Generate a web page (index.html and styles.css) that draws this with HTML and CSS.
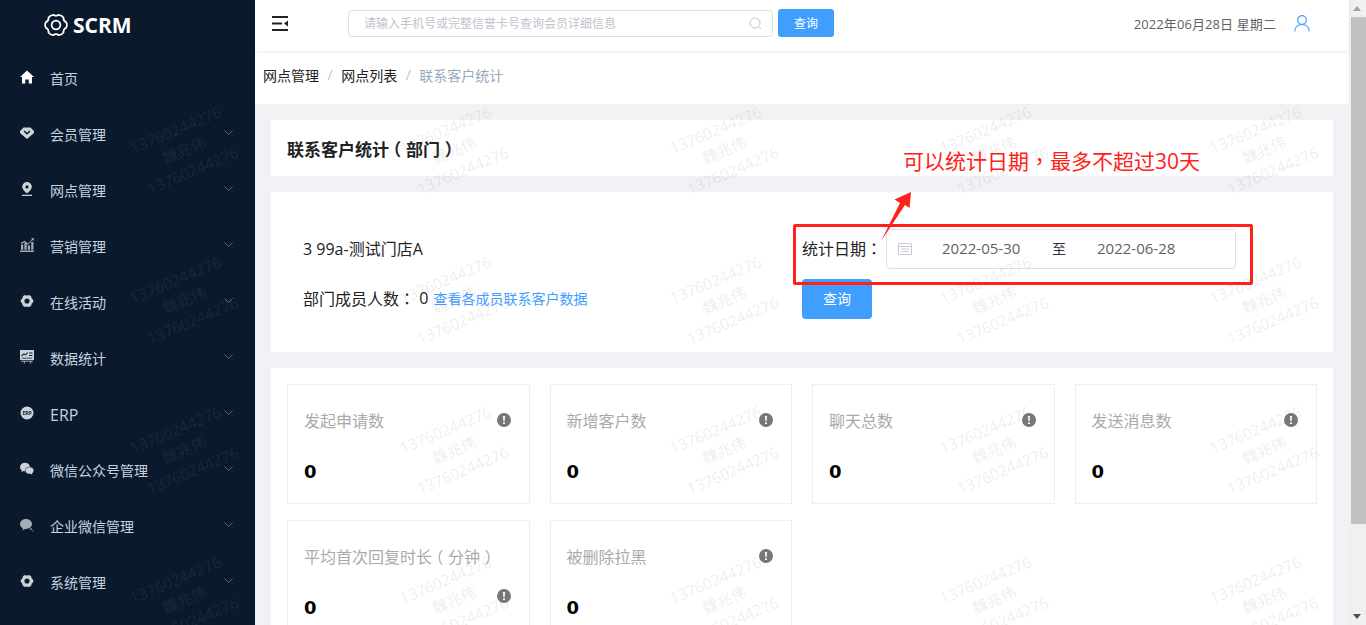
FILE: index.html
```html
<!DOCTYPE html>
<html lang="zh-CN">
<head>
    <meta charset="UTF-8">
    <meta name="viewport" content="width=device-width, initial-scale=1.0">
    <title>SCRM</title>
    <link rel="stylesheet" href="styles.css">
</head>
<body>
    <svg class="icon-defs" aria-hidden="true">
        <symbol id="gear-shape" viewBox="-12.5 -12.5 25 25">
            <path fill-rule="evenodd" d="M10.63-2.85Q12 0 10.63 2.85Q7.45 4.3 7.78 7.78Q6 10.39 2.85 10.63Q0 8.6-2.85 10.63Q-6 10.39-7.78 7.78Q-7.45 4.3-10.63 2.85Q-12 0-10.63-2.85Q-7.45-4.3-7.78-7.78Q-6-10.39-2.85-10.63Q0-8.6 2.85-10.63Q6-10.39 7.78-7.78Q7.45-4.3 10.63-2.85ZM4.6 0A4.6 4.6 0 1 0-4.6 0A4.6 4.6 0 1 0 4.6 0Z"/>
        </symbol>
        <symbol id="chevron" viewBox="0 0 9 5">
            <path d="M.5.5L4.5 4.5L8.5.5" fill="none" stroke="currentColor"/>
        </symbol>
        <symbol id="info" viewBox="0 0 14 14">
            <circle cx="7" cy="7" r="7" fill="#777"/>
            <path d="M6 3h2l-.35 5h-1.3zM6.1 9.2h1.8v1.8h-1.8z" fill="#fff"/>
        </symbol>
    </svg>

    <aside class="sidebar">
        <div class="logo">
            <svg class="logo-gear" width="24" height="24" viewBox="-12.5 -12.5 25 25">
                <path fill="none" stroke="#fff" stroke-width="1.8" d="M10.63-2.85Q12 0 10.63 2.85Q7.45 4.3 7.78 7.78Q6 10.39 2.85 10.63Q0 8.6-2.85 10.63Q-6 10.39-7.78 7.78Q-7.45 4.3-10.63 2.85Q-12 0-10.63-2.85Q-7.45-4.3-7.78-7.78Q-6-10.39-2.85-10.63Q0-8.6 2.85-10.63Q6-10.39 7.78-7.78Q7.45-4.3 10.63-2.85Z"/>
                <circle r="4.6" fill="none" stroke="#fff" stroke-width="1.8"/>
            </svg>
            <span>SCRM</span>
        </div>
        <nav class="nav">
            <a class="nav-item">
                <svg class="nav-icon nav-icon-home" viewBox="0 0 14 14"><path d="M7 .5L14 7h-2v6.5H8.7V9.5H5.3v4H2V7H0z"/></svg>
                <span>首页</span>
            </a>
            <a class="nav-item">
                <svg class="nav-icon" viewBox="0 0 14 14"><path fill-rule="evenodd" d="M3.5 1.5h7L14 5v2l-7 6-7-6V5zM3.6 5.6L7 8.7l3.4-3.1-1-1L7 6.8 4.6 4.6z"/></svg>
                <span>会员管理</span>
                <svg class="nav-arrow"><use href="#chevron"/></svg>
            </a>
            <a class="nav-item">
                <svg class="nav-icon" viewBox="0 0 14 14"><path fill-rule="evenodd" d="M7 0a4.8 4.8 0 0 1 4.8 4.8C11.800 8 7 11.500 7 11.500S2.200 8 2.200 4.800A4.800 4.800 0 0 1 7 0zM7 3.300a1.600 1.600 0 1 0 0 3.200 1.600 1.600 0 0 0 0-3.200zM2 12.800h10V14H2z"/></svg>
                <span>网点管理</span>
                <svg class="nav-arrow"><use href="#chevron"/></svg>
            </a>
            <a class="nav-item">
                <svg class="nav-icon nav-icon-dim" viewBox="0 0 14 14"><path d="M0 12.500h14V14H0zM1 6.500h2.200v5.300H1zM4.400 5h2.200v6.800H4.400zM7.800 7.500H10v4.300H7.800zM11.200 4h2.200v7.800h-2.200zM.8 5L4.500 2.800 8 5.500 12 1.500 11 .5 14 0l-.5 3-1-1L8 6.800 4.500 4.200 1.200 6z"/></svg>
                <span>营销管理</span>
                <svg class="nav-arrow"><use href="#chevron"/></svg>
            </a>
            <a class="nav-item">
                <svg class="nav-icon"><use href="#gear-shape"/></svg>
                <span>在线活动</span>
                <svg class="nav-arrow"><use href="#chevron"/></svg>
            </a>
            <a class="nav-item">
                <svg class="nav-icon" viewBox="0 0 14 14"><path fill-rule="evenodd" d="M0 0h14v10H0zM1.800 6.500l2.200-2 1.500 1L8 3 7.200 2.300 5.400 4.200l-1.500-1L1.200 5.600zM9 2.500v1h3.500v-1zM9 5v1h3.500V5zM1.800 7.700v.8h10.400v-.8zM1 10.800h12v.8h-1.800v2h-.8v-2H4.600v2h-.8v-2H1z"/></svg>
                <span>数据统计</span>
                <svg class="nav-arrow"><use href="#chevron"/></svg>
            </a>
            <a class="nav-item">
                <svg class="nav-icon" viewBox="0 0 14 14"><circle cx="7" cy="7" r="6.500"/><text class="erp-text" x="7" y="8.700">ERP</text></svg>
                <span class="nav-label-latin">ERP</span>
                <svg class="nav-arrow"><use href="#chevron"/></svg>
            </a>
            <a class="nav-item">
                <svg class="nav-icon" viewBox="0 0 14 14"><ellipse cx="5" cy="5" rx="5" ry="4.300"/><path d="M2 7.500L1.500 10l3-1.500z"/><ellipse class="nav-icon-cut" cx="9.500" cy="8.500" rx="4.500" ry="3.800"/><ellipse cx="9.500" cy="8.500" rx="4" ry="3.300"/><path d="M11.500 10.500l1 2.300-3-1.500z"/></svg>
                <span>微信公众号管理</span>
                <svg class="nav-arrow"><use href="#chevron"/></svg>
            </a>
            <a class="nav-item">
                <svg class="nav-icon nav-icon-dim" viewBox="0 0 14 14"><ellipse cx="6" cy="6" rx="6" ry="5"/><path d="M3 9.500L2.500 12.500l3.500-2z"/><circle cx="11" cy="11" r="1.200" opacity=".6"/><circle cx="13" cy="12.700" r=".8" opacity=".6"/></svg>
                <span>企业微信管理</span>
                <svg class="nav-arrow"><use href="#chevron"/></svg>
            </a>
            <a class="nav-item">
                <svg class="nav-icon"><use href="#gear-shape"/></svg>
                <span>系统管理</span>
                <svg class="nav-arrow"><use href="#chevron"/></svg>
            </a>
        </nav>
    </aside>

    <div class="main">
        <header class="topbar">
            <svg class="menu-toggle" width="16" height="15" viewBox="0 0 16 15"><path d="M0 0h16v2H0zM0 6.500h10v2H0zM0 13h16v2H0zM16 4.500v6l-4-3z" fill="#222"/></svg>
            <div class="search-box">
                <span class="search-hint">请输入手机号或完整信誉卡号查询会员详细信息</span>
                <svg width="13" height="13" viewBox="0 0 13 13"><circle cx="6" cy="6" r="5" fill="none" stroke="#c0c4cc"/><path d="M9.500 9.500l2.500 2.500" stroke="#c0c4cc"/></svg>
            </div>
            <button class="btn btn-small">查询</button>
            <span class="today">2022年06月28日 星期二</span>
            <svg class="user-icon" width="16" height="17" viewBox="0 0 16 17"><circle cx="8" cy="5" r="4.300" fill="none" stroke="#409eff" stroke-width="1.200"/><path d="M.7 16.500C1 12 4 9.500 8 9.500s7 2.500 7.300 7" fill="none" stroke="#409eff" stroke-width="1.200"/></svg>
        </header>

        <div class="breadcrumb">
            <span>网点管理</span><i>/</i><span>网点列表</span><i>/</i><span class="current">联系客户统计</span>
        </div>

        <div class="content">
            <section class="card title-card"><h2>联系客户统计<span class="paren-open">（</span>部门<span class="paren-close">）</span></h2></section>

            <section class="card filter-card">
                <div class="filter-cell shop-name">3 99a-测试门店A</div>
                <div class="filter-cell">
                    <label class="date-label">统计日期<span class="punct" lang="zh-TW">：</span></label>
                    <div class="date-range">
                        <svg class="date-icon" width="14" height="13" viewBox="0 0 14 13"><path d="M.5 1.500h13v11H.5zM.5 4.500h13M3 7h8M3 9.500h8" fill="none" stroke="#c9ced6"/></svg>
                        <span class="date-value">2022-05-30</span>
                        <span class="date-sep">至</span>
                        <span class="date-value">2022-06-28</span>
                    </div>
                </div>
                <div class="filter-cell shop-members">部门成员人数<span class="punct" lang="zh-TW">：</span> 0 <a class="member-link">查看各成员联系客户数据</a></div>
                <div class="filter-cell"><button class="btn btn-query">查询</button></div>
            </section>

            <section class="card stats-card">
                <div class="stat"><p class="stat-title">发起申请数</p><svg class="stat-tip"><use href="#info"/></svg><b class="stat-value">0</b></div>
                <div class="stat"><p class="stat-title">新增客户数</p><svg class="stat-tip"><use href="#info"/></svg><b class="stat-value">0</b></div>
                <div class="stat"><p class="stat-title">聊天总数</p><svg class="stat-tip"><use href="#info"/></svg><b class="stat-value">0</b></div>
                <div class="stat"><p class="stat-title">发送消息数</p><svg class="stat-tip"><use href="#info"/></svg><b class="stat-value">0</b></div>
                <div class="stat"><p class="stat-title">平均首次回复时长<span class="paren-open">（</span>分钟<span class="paren-close">）</span></p><svg class="stat-tip stat-tip-low"><use href="#info"/></svg><b class="stat-value">0</b></div>
                <div class="stat"><p class="stat-title">被删除拉黑</p><svg class="stat-tip"><use href="#info"/></svg><b class="stat-value">0</b></div>
            </section>
        </div>
    </div>

    <div class="scrollbar">
        <span class="scroll-up"></span>
        <span class="scroll-thumb"></span>
        <span class="scroll-down"></span>
    </div>

    <div class="watermark" aria-hidden="true">
        <div class="wm"><span>13760244276</span><span>魏兆伟</span><span>13760244276</span></div>
        <div class="wm"><span>13760244276</span><span>魏兆伟</span><span>13760244276</span></div>
        <div class="wm"><span>13760244276</span><span>魏兆伟</span><span>13760244276</span></div>
        <div class="wm"><span>13760244276</span><span>魏兆伟</span><span>13760244276</span></div>
        <div class="wm"><span>13760244276</span><span>魏兆伟</span><span>13760244276</span></div>
        <div class="wm"><span>13760244276</span><span>魏兆伟</span><span>13760244276</span></div>
        <div class="wm"><span>13760244276</span><span>魏兆伟</span><span>13760244276</span></div>
        <div class="wm"><span>13760244276</span><span>魏兆伟</span><span>13760244276</span></div>
        <div class="wm"><span>13760244276</span><span>魏兆伟</span><span>13760244276</span></div>
        <div class="wm"><span>13760244276</span><span>魏兆伟</span><span>13760244276</span></div>
        <div class="wm"><span>13760244276</span><span>魏兆伟</span><span>13760244276</span></div>
        <div class="wm"><span>13760244276</span><span>魏兆伟</span><span>13760244276</span></div>
        <div class="wm"><span>13760244276</span><span>魏兆伟</span><span>13760244276</span></div>
        <div class="wm"><span>13760244276</span><span>魏兆伟</span><span>13760244276</span></div>
        <div class="wm"><span>13760244276</span><span>魏兆伟</span><span>13760244276</span></div>
        <div class="wm"><span>13760244276</span><span>魏兆伟</span><span>13760244276</span></div>
        <div class="wm"><span>13760244276</span><span>魏兆伟</span><span>13760244276</span></div>
        <div class="wm"><span>13760244276</span><span>魏兆伟</span><span>13760244276</span></div>
        <div class="wm"><span>13760244276</span><span>魏兆伟</span><span>13760244276</span></div>
        <div class="wm"><span>13760244276</span><span>魏兆伟</span><span>13760244276</span></div>
    </div>

    <!-- red notes drawn over the page -->
    <div class="note-box"></div>
    <svg class="note-arrow" width="34" height="52" viewBox="0 0 34 52"><path d="M1 50L20 12L14.500 8.500L31 1L29.500 17L25 14Z" fill="#ff2218"/></svg>
    <div class="note-text">可以统计日期<span class="punct" lang="zh-TW">，</span>最多不超过30天</div>
</body>
</html>
```

FILE: styles.css
```css
* {
    box-sizing: border-box;
}

html, body {
    height: 100%;
}

body {
    margin: 0;
    display: flex;
    overflow: hidden;
    position: relative;
    font-family: "Open Sans", "Noto Sans CJK SC", sans-serif;
    font-size: 14px;
    color: #222;
    background: #f0f2f5;
    text-spacing-trim: space-all;
}

.icon-defs {
    display: none;
}

/* the TC cut centres full-width punctuation in its box */
.punct {
    font-family: "Noto Sans CJK TC", sans-serif;
}

/* brackets sit at one side of their box in every cut, so nudge them to the middle */
.paren-open,
.paren-close {
    display: inline-block;
}

.paren-open {
    transform: translateX(-0.28em);
}

.paren-close {
    transform: translateX(0.28em);
}

/* sidebar */
.sidebar {
    width: 255px;
    flex: none;
    background: #0a1a2c;
    color: #c5d3e0;
}

.logo {
    height: 50px;
    padding-left: 44px;
    display: flex;
    align-items: center;
    gap: 5px;
    color: #fff;
    font-size: 21px;
    font-weight: 700;
}

.nav-item {
    height: 56px;
    padding-left: 20px;
    display: flex;
    align-items: center;
}

.nav-icon {
    width: 14px;
    height: 14px;
    flex: none;
    margin-right: 16px;
    margin-bottom: 2px;
    fill: #ccd3da;
}

.nav-icon-home {
    fill: #fff;
}

.nav-icon-dim {
    fill: #a5aeb8;
}

.nav-icon-cut {
    fill: #0a1a2c;
}

.nav-label-latin {
    margin-top: 1px;
    font-size: 16px;
}

.erp-text {
    font-size: 5px;
    font-weight: 700;
    text-anchor: middle;
    fill: #0a1a2c;
}

.nav-arrow {
    width: 9px;
    height: 5px;
    margin-left: auto;
    margin-right: 22px;
    margin-bottom: 4px;
    color: #5d6d7e;
}

/* top */
.main {
    flex: 1;
    min-width: 0;
    display: flex;
    flex-direction: column;
}

.topbar {
    height: 51px;
    flex: none;
    padding: 0 39px 5px 17px;
    display: flex;
    align-items: center;
    background: #fff;
    box-shadow: 0 1px 4px rgba(0, 21, 41, 0.08);
    position: relative;
}

.menu-toggle {
    margin-right: 60px;
}

.search-box {
    width: 425px;
    height: 27px;
    padding: 0 10px 0 15px;
    display: flex;
    align-items: center;
    justify-content: space-between;
    border: 1px solid #dcdfe6;
    border-radius: 4px;
}

.search-hint {
    font-size: 12px;
    color: #c0c4cc;
}

.btn {
    border: none;
    color: #fff;
    background: #409eff;
    font-family: inherit;
}

.btn-small {
    width: 56px;
    height: 28px;
    margin-left: 5px;
    border-radius: 3px;
    font-size: 12px;
}

.today {
    margin-left: auto;
    margin-right: 18px;
    font-size: 13px;
    letter-spacing: 0.1px;
    color: #606266;
}

.breadcrumb {
    height: 53px;
    flex: none;
    padding: 0 0 6px 8px;
    display: flex;
    align-items: center;
    background: #fff;
}

.breadcrumb i {
    margin: 0 8.500px;
    font-style: normal;
    color: #c0c4cc;
}

.breadcrumb .current {
    color: #97a8be;
}

/* content */
.content {
    flex: 1;
    min-height: 0;
    padding: 16px 16px 0;
    display: flex;
    flex-direction: column;
    gap: 16px;
}

.card {
    background: #fff;
}

.title-card {
    height: 56px;
    flex: none;
    padding: 0 16px;
    display: flex;
    align-items: center;
}

.title-card h2 {
    margin: 0;
    font-size: 17px;
    font-weight: 700;
}

.filter-card {
    height: 160px;
    flex: none;
    padding: 37px 16px 0;
    display: grid;
    grid-template-columns: 1fr 1fr;
    grid-template-rows: 40px 40px;
    row-gap: 10px;
}

.filter-cell {
    display: flex;
    align-items: center;
    font-size: 16px;
    white-space: pre-wrap;
}

.shop-name,
.shop-members {
    padding: 0 0 3px 16px;
}

.date-label {
    padding-bottom: 3px;
}

.member-link {
    margin-left: 1px;
    font-size: 14px;
    color: #409eff;
}

.date-range {
    width: 350px;
    height: 40px;
    margin-left: 4px;
    padding: 0 0 2px 11px;
    display: flex;
    align-items: center;
    border: 1px solid #dcdfe6;
    border-radius: 4px;
    color: #606266;
    font-size: 15px;
}

.date-icon {
    flex: none;
}

.date-value {
    width: 79px;
    flex: none;
    white-space: nowrap;
}

.date-icon + .date-value {
    margin-left: 30px;
}

.date-sep {
    margin: 0 31px;
    font-size: 14px;
    color: #303133;
}

.btn-query {
    width: 70px;
    height: 40px;
    padding-bottom: 3px;
    border-radius: 4px;
    font-size: 14px;
}

.stats-card {
    flex: 1;
    min-height: 0;
    padding: 16px;
    display: grid;
    grid-template-columns: repeat(4, 1fr);
    grid-auto-rows: 120px;
    gap: 16px 20px;
    overflow: hidden;
}

.stat {
    position: relative;
    padding: 25px 16px 0;
    border: 1px solid #eee;
}

.stat-title {
    margin: 0;
    font-size: 16px;
    line-height: 22px;
    color: #aaa;
    white-space: nowrap;
}

.stat-value {
    display: block;
    margin-top: 29px;
    font-family: "DejaVu Sans", sans-serif;
    font-size: 18px;
    line-height: 22px;
    color: #000;
}

.stat-tip {
    position: absolute;
    top: 28px;
    right: 18px;
    width: 14px;
    height: 14px;
}

.stat-tip-low {
    top: 68px;
}

/* fake window scrollbar */
.scrollbar {
    width: 17px;
    flex: none;
    padding-left: 2px;
    display: flex;
    flex-direction: column;
    background: #f0f0f0;
}

.scroll-up,
.scroll-down {
    height: 17px;
    flex: none;
    position: relative;
}

.scroll-up::after,
.scroll-down::after {
    content: "";
    position: absolute;
    left: 2px;
    top: 6px;
    border: 4px solid transparent;
    border-top: none;
    border-bottom: 5px solid #a3a3a3;
    width: 0;
}

.scroll-down::after {
    border-bottom: none;
    border-top: 5px solid #505050;
}

.scroll-thumb {
    height: 507px;
    flex: none;
    background: #c1c1c1;
}

.scroll-down {
    margin-top: auto;
}

/* overlays */
.watermark {
    position: absolute;
    left: 49px;
    top: 75px;
    display: grid;
    grid-template-columns: repeat(5, 270px);
    grid-auto-rows: 150px;
    pointer-events: none;
    height: 550px;
    overflow: hidden;
}

.wm {
    display: flex;
    flex-direction: column;
    align-items: center;
    justify-content: center;
    transform: rotate(-23deg);
    font-size: 15.500px;
    line-height: 22px;
    color: rgba(128, 128, 128, 0.15);
}

.note-box {
    position: absolute;
    left: 793px;
    top: 224px;
    width: 460px;
    height: 61px;
    border: 3px solid #ff2218;
    border-radius: 2px;
}

.note-arrow {
    position: absolute;
    left: 880px;
    top: 191px;
}

.note-text {
    position: absolute;
    left: 903px;
    top: 145px;
    font-size: 21px;
    line-height: 30px;
    color: #ff2218;
    white-space: nowrap;
}
```
